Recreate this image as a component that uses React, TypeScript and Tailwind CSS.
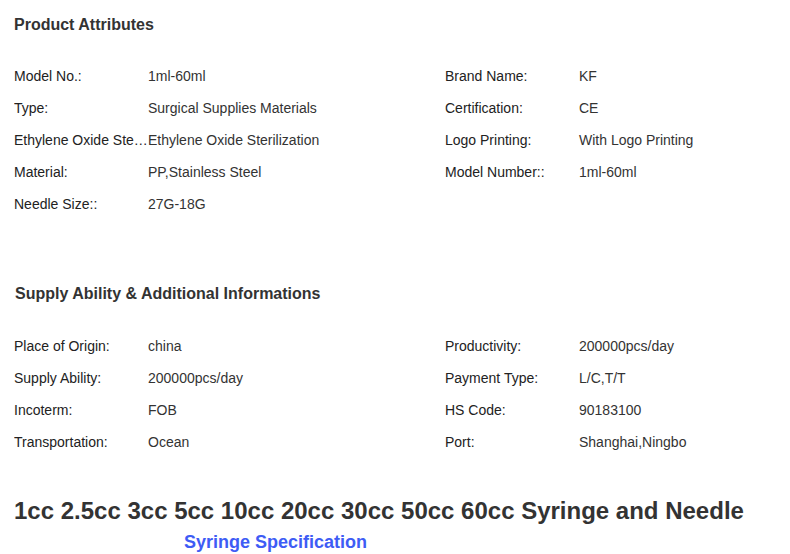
import React from "react";

type Attr = { label: string; value: string };

const productAttrs: Attr[][] = [
  [
    { label: "Model No.:", value: "1ml-60ml" },
    { label: "Brand Name:", value: "KF" },
  ],
  [
    { label: "Type:", value: "Surgical Supplies Materials" },
    { label: "Certification:", value: "CE" },
  ],
  [
    { label: "Ethylene Oxide Sterilization:", value: "Ethylene Oxide Sterilization" },
    { label: "Logo Printing:", value: "With Logo Printing" },
  ],
  [
    { label: "Material:", value: "PP,Stainless Steel" },
    { label: "Model Number::", value: "1ml-60ml" },
  ],
  [{ label: "Needle Size::", value: "27G-18G" }],
];

const supplyAttrs: Attr[][] = [
  [
    { label: "Place of Origin:", value: "china" },
    { label: "Productivity:", value: "200000pcs/day" },
  ],
  [
    { label: "Supply Ability:", value: "200000pcs/day" },
    { label: "Payment Type:", value: "L/C,T/T" },
  ],
  [
    { label: "Incoterm:", value: "FOB" },
    { label: "HS Code:", value: "90183100" },
  ],
  [
    { label: "Transportation:", value: "Ocean" },
    { label: "Port:", value: "Shanghai,Ningbo" },
  ],
];

function Cell({ item }: { item?: Attr }) {
  if (!item) return <div className="w-[431px] shrink-0" />;
  return (
    <div className="flex w-[431px] shrink-0 items-center">
      <span className="w-[134px] shrink-0 truncate text-[#222]">{item.label}</span>
      <span className="text-[#333]">{item.value}</span>
    </div>
  );
}

function AttrTable({ rows }: { rows: Attr[][] }) {
  return (
    <div className="flex flex-col">
      {rows.map((row, i) => (
        <div key={i} className="flex h-[32px] items-center">
          <Cell item={row[0]} />
          <Cell item={row[1]} />
        </div>
      ))}
    </div>
  );
}

export default function App() {
  return (
    <div
      className="min-h-screen w-[790px] overflow-hidden bg-white pl-[14px] text-[14px]"
      style={{ fontFamily: '"Liberation Sans", Arial, sans-serif' }}
    >
      <h2 className="pt-[15px] text-[16px] font-bold leading-[20px] text-[#333]">
        Product Attributes
      </h2>
      <div className="mt-[25px]">
        <AttrTable rows={productAttrs} />
      </div>

      <h2 className="mt-[64px] pl-px text-[16px] font-bold leading-[20px] text-[#333]">
        Supply Ability &amp; Additional Informations
      </h2>
      <div className="mt-[26px]">
        <AttrTable rows={supplyAttrs} />
      </div>

      <h1 className="mt-[37px] whitespace-nowrap text-[24px] font-bold leading-[32px] text-[#333]">
        1cc 2.5cc 3cc 5cc 10cc 20cc 30cc 50cc 60cc Syringe and Needle
      </h1>
      <p className="mt-[3px] pl-[170px] text-[18px] font-bold leading-[24px] text-[#3e5cf5]">
        Syringe Specification
      </p>
    </div>
  );
}
